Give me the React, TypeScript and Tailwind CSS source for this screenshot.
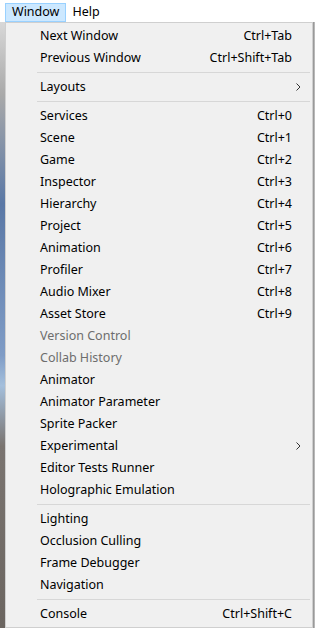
import React from 'react';

type Entry =
  | { kind: 'sep' }
  | { kind: 'item'; label: string; shortcut?: string; sub?: boolean; disabled?: boolean };

const entries: Entry[] = [
  { kind: 'item', label: 'Next Window', shortcut: 'Ctrl+Tab' },
  { kind: 'item', label: 'Previous Window', shortcut: 'Ctrl+Shift+Tab' },
  { kind: 'sep' },
  { kind: 'item', label: 'Layouts', sub: true },
  { kind: 'sep' },
  { kind: 'item', label: 'Services', shortcut: 'Ctrl+0' },
  { kind: 'item', label: 'Scene', shortcut: 'Ctrl+1' },
  { kind: 'item', label: 'Game', shortcut: 'Ctrl+2' },
  { kind: 'item', label: 'Inspector', shortcut: 'Ctrl+3' },
  { kind: 'item', label: 'Hierarchy', shortcut: 'Ctrl+4' },
  { kind: 'item', label: 'Project', shortcut: 'Ctrl+5' },
  { kind: 'item', label: 'Animation', shortcut: 'Ctrl+6' },
  { kind: 'item', label: 'Profiler', shortcut: 'Ctrl+7' },
  { kind: 'item', label: 'Audio Mixer', shortcut: 'Ctrl+8' },
  { kind: 'item', label: 'Asset Store', shortcut: 'Ctrl+9' },
  { kind: 'item', label: 'Version Control', disabled: true },
  { kind: 'item', label: 'Collab History', disabled: true },
  { kind: 'item', label: 'Animator' },
  { kind: 'item', label: 'Animator Parameter' },
  { kind: 'item', label: 'Sprite Packer' },
  { kind: 'item', label: 'Experimental', sub: true },
  { kind: 'item', label: 'Editor Tests Runner' },
  { kind: 'item', label: 'Holographic Emulation' },
  { kind: 'sep' },
  { kind: 'item', label: 'Lighting' },
  { kind: 'item', label: 'Occlusion Culling' },
  { kind: 'item', label: 'Frame Debugger' },
  { kind: 'item', label: 'Navigation' },
  { kind: 'sep' },
  { kind: 'item', label: 'Console', shortcut: 'Ctrl+Shift+C' },
];

const Chevron = () => (
  <svg width="5" height="8" viewBox="0 0 5 8" className="mr-[11px]">
    <path d="M0.5 0.5 L4 4 L0.5 7.5" fill="none" stroke="#333" strokeWidth="1" />
  </svg>
);

export default function App() {
  return (
    <div className="w-[315px] h-[628px] bg-white overflow-hidden text-[12.5px] text-black font-['Noto_Sans','Noto_Sans_CJK_SC',sans-serif]">
      {/* menu bar */}
      <div className="h-[22px] flex items-start pt-[3px] pl-[5px]">
        <div className="h-[19px] px-[6px] flex items-center bg-[#cce8ff] border border-[#99d1ff]">Window</div>
        <div className="h-[19px] px-[6px] flex items-center">Help</div>
      </div>

      <div className="flex h-[606px]">
        {/* editor behind the menu */}
        <div className="w-[5px] bg-[linear-gradient(#d8d8d8_0%,#a9a9a9_12%,#5a78a6_30%,#7f9cc6_55%,#a4bfdc_60%,#7a7470_70%,#6b6560_100%)]" />

        <div className="w-[308px] bg-[#f0f0f0] border border-[#cfcfcf] pt-[2px] flex flex-col">
          {entries.map((e, i) =>
            e.kind === 'sep' ? (
              <div key={i} className="h-[7px] flex items-center pl-[31px] pr-[2px]">
                <div className="h-px w-full bg-[#d7d7d7]" />
              </div>
            ) : (
              <div
                key={i}
                className={`h-[22px] flex items-center pl-[34px] ${e.disabled ? 'text-[#6d6d6d]' : ''}`}
              >
                <span className="flex-1">{e.label}</span>
                {e.shortcut && <span className="mr-[20px]">{e.shortcut}</span>}
                {e.sub && <Chevron />}
              </div>
            )
          )}
        </div>

        <div className="w-[2px] bg-[linear-gradient(90deg,#8a8a8a,#c8c8c8)]" />
      </div>
    </div>
  );
}
